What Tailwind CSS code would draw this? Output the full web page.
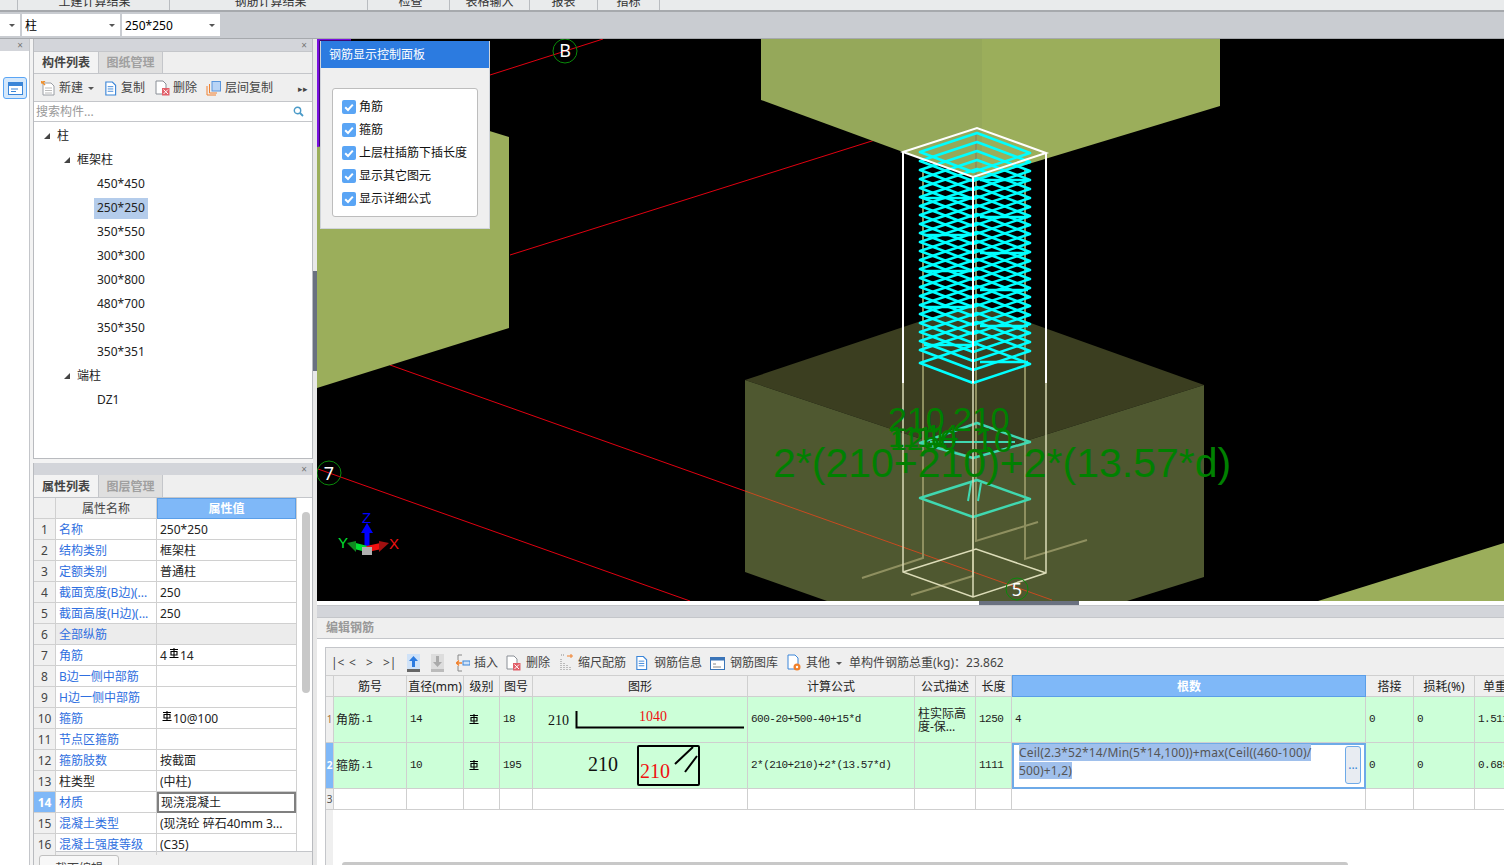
<!DOCTYPE html>
<html lang="zh-CN">
<head>
<meta charset="utf-8">
<title>钢筋</title>
<script src="https://cdn.jsdelivr.net/npm/@tailwindcss/browser@4"></script>
</head>
<body class="m-0 bg-white">
<svg width="0" height="0" class="absolute">
  <defs>
    <symbol id="rb" viewBox="0 0 10 12"><path d="M1 1.5H9M5 0V9M2 3.5H8V7H2ZM0.5 9.5H9.5" fill="none" stroke="currentColor" stroke-width="1.1"/></symbol>
    <symbol id="chk" viewBox="0 0 14 14"><rect width="14" height="14" rx="2" fill="#5aa5f5"/><path d="M3.2 7.2L6 10L10.8 4.6" fill="none" stroke="#fff" stroke-width="2"/></symbol>
    <symbol id="doc" viewBox="0 0 14 16"><path d="M2 1H9L12.5 4.5V15H2Z" fill="#fff" stroke="#3a85d8" stroke-width="1.2"/><path d="M4 6H10M4 8.5H10M4 11H10" stroke="#3a85d8"/></symbol>
    <symbol id="del" viewBox="0 0 15 16"><path d="M1 1H8L11 4V14H1Z" fill="#fff" stroke="#8a8f96"/><rect x="7" y="8" width="7.5" height="7.5" fill="#e2606a"/><path d="M8.5 9.5L13 14M13 9.5L8.5 14" stroke="#fff"/></symbol>
    <g id="hoop"><path d="M920 152L977 133L1030 153L973 172Z" fill="none" stroke="#00ffff" stroke-width="2.6" stroke-linejoin="round"/></g>
  </defs>
</svg>

<div class="w-[1504px] h-[865px] overflow-hidden flex flex-col font-['Noto_Sans','Noto_Sans_CJK_SC',sans-serif] text-[12px] text-black bg-[#f3f3f3]">

  <!-- top tabs, clipped by the window -->
  <div class="h-[12px] shrink-0 flex items-end overflow-hidden bg-[#e9ebec] border-b-2 border-[#a6a9ad] text-[#333]">
    <div class="w-[18px] h-full border-r border-[#b9bcc0]"></div>
    <div class="w-[152px] h-full flex items-end justify-center pl-[2px] border-r border-[#b9bcc0]"><span class="leading-[16px]">土建计算结果</span></div>
    <div class="w-[198px] h-full flex items-end justify-center pl-[4px] border-r border-[#b9bcc0]"><span class="leading-[16px]">钢筋计算结果</span></div>
    <div class="w-[82px] h-full flex items-end justify-center pl-[4px] border-r border-[#b9bcc0]"><span class="leading-[16px]">检查</span></div>
    <div class="w-[80px] h-full flex items-end justify-center border-r border-[#b9bcc0]"><span class="leading-[16px]">表格输入</span></div>
    <div class="w-[68px] h-full flex items-end justify-center border-r border-[#b9bcc0]"><span class="leading-[16px]">报表</span></div>
    <div class="w-[62px] h-full flex items-end justify-center border-r border-[#b9bcc0]"><span class="leading-[16px]">指标</span></div>
  </div>

  <!-- selector bar -->
  <div class="h-[27px] shrink-0 flex items-center bg-[#c9ccd1] border-b border-[#a6a9ad]">
    <div class="w-[20px] h-[22px] bg-white flex items-center justify-end pr-[5px]"><span class="w-0 h-0 border-x-[3px] border-x-transparent border-t-[3px] border-t-[#555]"></span></div>
    <div class="w-[98px] h-[22px] ml-[2px] bg-white flex items-center justify-between pl-[3px] pr-[5px] pt-[1px]"><span>柱</span><span class="w-0 h-0 border-x-[3px] border-x-transparent border-t-[3px] border-t-[#555]"></span></div>
    <div class="w-[98px] h-[22px] ml-[2px] bg-white flex items-center justify-between pl-[3px] pr-[5px] pt-[1px]"><span>250*250</span><span class="w-0 h-0 border-x-[3px] border-x-transparent border-t-[3px] border-t-[#555]"></span></div>
  </div>

  <div class="flex-1 flex min-h-0">
    <!-- rail -->
    <div class="w-[30px] shrink-0 bg-white border-r border-[#c4c6ca] flex flex-col">
      <div class="h-[12px] bg-[#d3d5da] flex items-center justify-end pr-[6px] text-[10px] leading-none text-[#777]">×</div>
      <div class="ml-[3px] mt-[26px] w-[24px] h-[22px] rounded-[3px] border border-[#5aa5f5] bg-[#d5e8fb] flex items-center justify-center">
        <svg width="15" height="13" viewBox="0 0 15 13"><rect x="0.5" y="0.5" width="14" height="12" fill="#fff" stroke="#3a85d8"/><rect x="0.5" y="0.5" width="14" height="3.5" fill="#3a85d8"/><path d="M3 7H10M3 9.5H8" stroke="#3a85d8"/></svg>
      </div>
    </div>

    <!-- left column -->
    <div class="w-[280px] ml-[3px] shrink-0 flex flex-col">
      <!-- component list -->
      <div class="h-[420px] shrink-0 flex flex-col border-x border-b border-[#b9bbbf] bg-white">
        <div class="h-[12px] bg-[#d3d5da] flex items-center justify-end pr-[5px] text-[10px] leading-none text-[#777]">×</div>
        <div class="h-[23px] flex bg-[#efefef] border-y border-[#c4c6ca]">
          <div class="w-[65px] flex items-center justify-center font-bold text-[#444] bg-[#f3f3f3] border-r border-[#c4c6ca]">构件列表</div>
          <div class="w-[64px] flex items-center justify-center font-bold text-[#a0a0a0] bg-[#dfdfdf] border-r border-[#c4c6ca]">图纸管理</div>
        </div>
        <div class="h-[28px] flex items-center bg-[#efefef] border-b border-[#c4c6ca] text-[#444] pt-[1px]">
          <svg class="ml-[7px]" width="15" height="15" viewBox="0 0 15 15"><path d="M2 2H10L13 5V14H2Z" fill="#fff" stroke="#9a9ea4"/><path d="M4 7H11M4 9.500H11M4 12H11" stroke="#bbb"/><path d="M0 2L4 0M0 0L4 4" stroke="#f0902c" stroke-width="1.5"/></svg>
          <span class="ml-[3px]">新建</span>
          <span class="ml-[5px] w-0 h-0 border-x-[3px] border-x-transparent border-t-[3px] border-t-[#555]"></span>
          <svg class="ml-[10px] w-[13px] h-[15px]"><use href="#doc"/></svg>
          <span class="ml-[4px]">复制</span>
          <svg class="ml-[10px] w-[15px] h-[16px]"><use href="#del"/></svg>
          <span class="ml-[3px]">删除</span>
          <svg class="ml-[9px]" width="15" height="15" viewBox="0 0 15 15"><path d="M1 14V5M1 14H10M3.500 12V3M3.500 12H11" fill="none" stroke="#f08030"/><rect x="6" y="0.500" width="8.500" height="9.500" fill="#b8d4f6" stroke="#5a96dc"/></svg>
          <span class="ml-[4px]">层间复制</span>
          <span class="ml-[25px] text-[9px] leading-none">▸▸</span>
        </div>
        <div class="h-[20px] flex items-center justify-between pl-[2px] pr-[8px] text-[#999] border-b border-[#c4c6ca]">
          <span>搜索构件...</span>
          <svg width="11" height="11" viewBox="0 0 11 11"><circle cx="4.500" cy="4.500" r="3.200" fill="none" stroke="#4a9ac8" stroke-width="1.400"/><path d="M7 7L10 10" stroke="#4a9ac8" stroke-width="1.800"/></svg>
        </div>
        <div class="flex-1 pt-[2px] text-[#222]">
          <div class="h-[24px] flex items-center pl-[10px]"><span class="w-0 h-0 border-l-[6px] border-l-transparent border-b-[6px] border-b-[#444]"></span><span class="ml-[7px]">柱</span></div>
          <div class="h-[24px] flex items-center pl-[30px]"><span class="w-0 h-0 border-l-[6px] border-l-transparent border-b-[6px] border-b-[#444]"></span><span class="ml-[7px]">框架柱</span></div>
          <div class="h-[24px] flex items-center pl-[63px]">450*450</div>
          <div class="h-[24px] flex items-center pl-[60px]"><span class="h-[21px] px-[3px] flex items-center bg-[#b4cceb]">250*250</span></div>
          <div class="h-[24px] flex items-center pl-[63px]">350*550</div>
          <div class="h-[24px] flex items-center pl-[63px]">300*300</div>
          <div class="h-[24px] flex items-center pl-[63px]">300*800</div>
          <div class="h-[24px] flex items-center pl-[63px]">480*700</div>
          <div class="h-[24px] flex items-center pl-[63px]">350*350</div>
          <div class="h-[24px] flex items-center pl-[63px]">350*351</div>
          <div class="h-[24px] flex items-center pl-[30px]"><span class="w-0 h-0 border-l-[6px] border-l-transparent border-b-[6px] border-b-[#444]"></span><span class="ml-[7px]">端柱</span></div>
          <div class="h-[24px] flex items-center pl-[63px]">DZ1</div>
        </div>
      </div>

      <!-- property list -->
      <div class="mt-[4px] flex-1 min-h-0 flex flex-col border-x border-[#b9bbbf] bg-[#f0f0f0]">
        <div class="h-[12px] shrink-0 bg-[#d3d5da] flex items-center justify-end pr-[5px] text-[10px] leading-none text-[#777]">×</div>
        <div class="h-[23px] shrink-0 flex bg-[#efefef] border-b border-[#c4c6ca]">
          <div class="w-[65px] pt-[1px] flex items-center justify-center font-bold text-[#444] bg-[#f3f3f3] border-r border-[#c4c6ca]">属性列表</div>
          <div class="w-[64px] pt-[1px] flex items-center justify-center font-bold text-[#a0a0a0] bg-[#dfdfdf] border-r border-[#c4c6ca]">图层管理</div>
        </div>
        <div class="flex h-[354px] shrink-0 bg-white border-b border-[#c4c6ca]">
          <div class="w-[262px] grid grid-cols-[22px_101px_139px] auto-rows-[21px] text-[#222] [&>div]:pt-[1px]">
            <div class="bg-[#f0f0f0] border-r border-b border-[#d0d0d0]"></div><div class="bg-[#f0f0f0] border-r border-b border-[#d0d0d0] flex items-center justify-center text-[#444]">属性名称</div><div class="bg-[#7fb8f8] border border-[#5a9ee8] flex items-center justify-center font-bold text-white">属性值</div>
            <div class="bg-[#f0f0f0] border-r border-b border-[#d0d0d0] flex items-center justify-center text-[#444]">1</div><div class="border-r border-b border-[#d0d0d0] pl-[3px] flex items-center text-[#2f6fe0]">名称</div><div class="border-b border-[#d0d0d0] pl-[3px] flex items-center">250*250</div>
            <div class="bg-[#f0f0f0] border-r border-b border-[#d0d0d0] flex items-center justify-center text-[#444]">2</div><div class="border-r border-b border-[#d0d0d0] pl-[3px] flex items-center text-[#2f6fe0]">结构类别</div><div class="border-b border-[#d0d0d0] pl-[3px] flex items-center">框架柱</div>
            <div class="bg-[#f0f0f0] border-r border-b border-[#d0d0d0] flex items-center justify-center text-[#444]">3</div><div class="border-r border-b border-[#d0d0d0] pl-[3px] flex items-center text-[#2f6fe0]">定额类别</div><div class="border-b border-[#d0d0d0] pl-[3px] flex items-center">普通柱</div>
            <div class="bg-[#f0f0f0] border-r border-b border-[#d0d0d0] flex items-center justify-center text-[#444]">4</div><div class="border-r border-b border-[#d0d0d0] pl-[3px] flex items-center text-[#2f6fe0] whitespace-nowrap">截面宽度(B边)(...</div><div class="border-b border-[#d0d0d0] pl-[3px] flex items-center">250</div>
            <div class="bg-[#f0f0f0] border-r border-b border-[#d0d0d0] flex items-center justify-center text-[#444]">5</div><div class="border-r border-b border-[#d0d0d0] pl-[3px] flex items-center text-[#2f6fe0] whitespace-nowrap">截面高度(H边)(...</div><div class="border-b border-[#d0d0d0] pl-[3px] flex items-center">250</div>
            <div class="bg-[#f0f0f0] border-r border-b border-[#d0d0d0] flex items-center justify-center text-[#444]">6</div><div class="bg-[#ececec] border-r border-b border-[#d0d0d0] pl-[3px] flex items-center text-[#2f6fe0]">全部纵筋</div><div class="bg-[#ececec] border-b border-[#d0d0d0] pl-[3px]"></div>
            <div class="bg-[#f0f0f0] border-r border-b border-[#d0d0d0] flex items-center justify-center text-[#444]">7</div><div class="border-r border-b border-[#d0d0d0] pl-[3px] flex items-center text-[#2f6fe0]">角筋</div><div class="border-b border-[#d0d0d0] pl-[3px] flex items-center">4<svg class="w-[10px] h-[12px] mb-[3px] text-black ml-[2px] mr-[1px]"><use href="#rb"/></svg>14</div>
            <div class="bg-[#f0f0f0] border-r border-b border-[#d0d0d0] flex items-center justify-center text-[#444]">8</div><div class="border-r border-b border-[#d0d0d0] pl-[3px] flex items-center text-[#2f6fe0]">B边一侧中部筋</div><div class="border-b border-[#d0d0d0]"></div>
            <div class="bg-[#f0f0f0] border-r border-b border-[#d0d0d0] flex items-center justify-center text-[#444]">9</div><div class="border-r border-b border-[#d0d0d0] pl-[3px] flex items-center text-[#2f6fe0]">H边一侧中部筋</div><div class="border-b border-[#d0d0d0]"></div>
            <div class="bg-[#f0f0f0] border-r border-b border-[#d0d0d0] flex items-center justify-center text-[#444]">10</div><div class="border-r border-b border-[#d0d0d0] pl-[3px] flex items-center text-[#2f6fe0]">箍筋</div><div class="border-b border-[#d0d0d0] pl-[5px] flex items-center"><svg class="w-[10px] h-[12px] mb-[3px] text-black mr-[1px]"><use href="#rb"/></svg>10@100</div>
            <div class="bg-[#f0f0f0] border-r border-b border-[#d0d0d0] flex items-center justify-center text-[#444]">11</div><div class="border-r border-b border-[#d0d0d0] pl-[3px] flex items-center text-[#2f6fe0]">节点区箍筋</div><div class="border-b border-[#d0d0d0]"></div>
            <div class="bg-[#f0f0f0] border-r border-b border-[#d0d0d0] flex items-center justify-center text-[#444]">12</div><div class="border-r border-b border-[#d0d0d0] pl-[3px] flex items-center text-[#2f6fe0]">箍筋肢数</div><div class="border-b border-[#d0d0d0] pl-[3px] flex items-center">按截面</div>
            <div class="bg-[#f0f0f0] border-r border-b border-[#d0d0d0] flex items-center justify-center text-[#444]">13</div><div class="border-r border-b border-[#d0d0d0] pl-[3px] flex items-center">柱类型</div><div class="border-b border-[#d0d0d0] pl-[3px] flex items-center">(中柱)</div>
            <div class="bg-[#7fb8f8] border-r border-b border-[#d0d0d0] flex items-center justify-center font-bold text-white">14</div><div class="border-r border-b border-[#d0d0d0] pl-[3px] flex items-center text-[#2f6fe0]">材质</div><div class="border-2 border-[#808080] pl-[2px] flex items-center">现浇混凝土</div>
            <div class="bg-[#f0f0f0] border-r border-b border-[#d0d0d0] flex items-center justify-center text-[#444]">15</div><div class="border-r border-b border-[#d0d0d0] pl-[3px] flex items-center text-[#2f6fe0]">混凝土类型</div><div class="border-b border-[#d0d0d0] pl-[3px] flex items-center whitespace-nowrap">(现浇砼 碎石40mm 3...</div>
            <div class="bg-[#f0f0f0] border-r border-[#d0d0d0] flex items-center justify-center text-[#444]">16</div><div class="border-r border-[#d0d0d0] pl-[3px] flex items-center text-[#2f6fe0]">混凝土强度等级</div><div class="pl-[3px] flex items-center">(C35)</div>
          </div>
          <div class="flex-1 border-l border-[#d0d0d0] pt-[14px] pl-[5px]"><div class="w-[8px] h-[181px] rounded-[4px] bg-[#c8c8c8]"></div></div>
        </div>
        <div class="ml-[5px] mt-[3px] w-[80px] h-[20px] pt-[4px] rounded-t-[3px] bg-[#f8f8f8] border border-[#c0c0c0] text-center text-[#444]">截面编辑</div>
      </div>
    </div>

    <!-- splitter -->
    <div class="w-[4px] shrink-0 bg-[#e8e8e8] pt-[232px]"><div class="w-[4px] h-[100px] bg-[#6a7180]"></div></div>

    <!-- right column -->
    <div class="flex-1 min-w-0 flex flex-col">
      <!-- 3D canvas -->
      <div class="relative h-[562px] shrink-0 bg-black overflow-hidden">
        <svg class="absolute left-0 top-0" width="1187" height="562" viewBox="317 39 1187 562">
          <path d="M317 39H351M318 39V147" fill="none" stroke="#7a10e0" stroke-width="3"/>
          <!-- red axes behind blocks -->
          <path d="M490 75L603 39M510 255L875 140M318 469L690 601M390 365L745 491" stroke="#e00010" stroke-width="1"/>
          <!-- left block -->
          <polygon points="317,147 470,125 509,137 509,328 317,388" fill="#9bae5b"/>
          <!-- upper slab -->
          <polygon points="761,39 982,39 982,180 903,152 761,100" fill="#95a85a"/>
          <polygon points="982,39 1220,39 1220,106 982,178" fill="#9bae5b"/>
          <!-- lower right block -->
          <polygon points="1504,543 1504,601 1318,601" fill="#9bae5b"/>
          <!-- pedestal -->
          <polygon points="745,380 975,303 1204,385 975,457" fill="#3b3e20"/>
          <polygon points="745,380 975,457 975,601 827,601 745,572" fill="#4f5830"/>
          <polygon points="975,457 1204,385 1204,577 1127,601 975,601" fill="#4f5830"/>
          <path d="M745 491L1052 600" stroke="#c84a20" stroke-width="1"/>
          <!-- rebar verticals and feet -->
          <path d="M923 170V558L862 578M1025 170V559L1087 540M976 135V541L1038 522M973 520V576L911 595" fill="none" stroke="#8f9060" stroke-width="2"/>
          <!-- hoops -->
          <g>
            <use href="#hoop"/><use href="#hoop" y="9"/><use href="#hoop" y="18"/><use href="#hoop" y="27"/><use href="#hoop" y="36"/><use href="#hoop" y="45"/><use href="#hoop" y="54"/><use href="#hoop" y="63"/>
            <use href="#hoop" y="72"/><use href="#hoop" y="81"/><use href="#hoop" y="90"/><use href="#hoop" y="99"/><use href="#hoop" y="108"/><use href="#hoop" y="117"/><use href="#hoop" y="126"/><use href="#hoop" y="135"/>
            <use href="#hoop" y="144"/><use href="#hoop" y="153"/><use href="#hoop" y="162"/><use href="#hoop" y="171"/><use href="#hoop" y="180"/><use href="#hoop" y="189"/><use href="#hoop" y="198"/><use href="#hoop" y="211"/>
            <path d="M924 198H972M924 235H972M924 271H972M924 307H972M924 345H972M980 180H1028M980 217H1028M980 253H1028M980 290H1028M980 326H1028M980 362H1028" stroke="#00ffff" stroke-width="2.5"/>
          </g>
          <!-- lower hoops seen through the block -->
          <path d="M920 443L977 423L1030 442L973 458Z M920 498L977 480L1030 499L973 517Z" fill="none" stroke="#40d8b0" stroke-width="2.4" stroke-linejoin="round"/>
          <path d="M968 501L971 483M978 501L981 483M930 442H1015" stroke="#40d8b0" stroke-width="2"/>
          <!-- column wireframe -->
          <path d="M903 152L977 128L1046 153L973 177ZM903 152V383M973 177V383M1046 153V383" fill="none" stroke="#ffffff" stroke-width="2"/>
          <path d="M903 383V572L973 597L1046 573V383M973 383V597M903 572L976 549L1046 573" fill="none" stroke="#dcdcb8" stroke-width="1.500"/>
          <!-- green annotation text -->
          <g fill="#008000" font-family="Liberation Sans, sans-serif">
            <text x="773" y="477" font-size="41">2*(210+210)+2*(13.57*d)</text>
            <text x="888" y="431" font-size="34">210</text>
            <text x="953" y="431" font-size="34">210</text>
            <text x="888" y="447" font-size="30">1111</text>
            <text x="890" y="450" font-size="30">1250</text>
            <text x="975" y="452" font-size="34">10</text>
            <text x="925" y="445" font-size="30">14</text>
          </g>
          <!-- grid bubbles -->
          <circle cx="565" cy="51" r="12" fill="none" stroke="#0a8a0a"/>
          <circle cx="329" cy="473" r="12" fill="none" stroke="#0a8a0a"/>
          <circle cx="1017" cy="589" r="11" fill="none" stroke="#0a8a0a"/>
          <g fill="#fff" font-family="Noto Sans, sans-serif" font-size="18" text-anchor="middle">
            <text x="565" y="57">B</text><text x="329" y="480">7</text><text x="1017" y="596">5</text>
          </g>
          <!-- axis triad -->
          <path d="M367 548V530" stroke="#0000ff" stroke-width="5"/><polygon points="361,533 373,533 367,523" fill="#0000ff"/>
          <path d="M367 549L355 546" stroke="#00e030" stroke-width="6"/><polygon points="356,541 356,552 347,543" fill="#108a20"/>
          <path d="M367 549L381 546" stroke="#f01010" stroke-width="6"/><polygon points="379,541 379,552 389,543" fill="#a01010"/>
          <rect x="362" y="547" width="10" height="8" fill="#b0b0b0"/>
          <g font-family="Liberation Sans, sans-serif" font-size="15">
            <text x="362" y="523" fill="#0000ff">Z</text><text x="338" y="548" fill="#00e030">Y</text><text x="389" y="549" fill="#f01010">X</text>
          </g>
        </svg>

        <!-- control panel overlay -->
        <div class="absolute left-[3px] top-[2px] w-[170px] h-[188px] bg-[#efefef] border-b border-r border-l border-[#d0d4da]">
          <div class="h-[27px] bg-[#2c7be0] text-white flex items-center pl-[8px]">钢筋显示控制面板</div>
          <div class="ml-[11px] mt-[20px] w-[146px] h-[129px] bg-white border border-[#bdbdbd] rounded-[3px] pt-[6px] pl-[9px] text-[#111]">
            <div class="h-[23px] flex items-center"><svg class="w-[14px] h-[14px]"><use href="#chk"/></svg><span class="ml-[3px]">角筋</span></div>
            <div class="h-[23px] flex items-center"><svg class="w-[14px] h-[14px]"><use href="#chk"/></svg><span class="ml-[3px]">箍筋</span></div>
            <div class="h-[23px] flex items-center"><svg class="w-[14px] h-[14px]"><use href="#chk"/></svg><span class="ml-[3px]">上层柱插筋下插长度</span></div>
            <div class="h-[23px] flex items-center"><svg class="w-[14px] h-[14px]"><use href="#chk"/></svg><span class="ml-[3px]">显示其它图元</span></div>
            <div class="h-[23px] flex items-center"><svg class="w-[14px] h-[14px]"><use href="#chk"/></svg><span class="ml-[3px]">显示详细公式</span></div>
          </div>
        </div>
      </div>

      <!-- splitter under canvas -->
      <div class="h-[4px] shrink-0 bg-white"><div class="ml-[662px] w-[100px] h-[4px] bg-[#6a7180]"></div></div>

      <!-- edit rebar panel -->
      <div class="flex-1 min-h-0 flex flex-col bg-white">
        <div class="h-[12px] shrink-0 bg-[#d3d5da] border-t border-[#c4c6ca]"></div>
        <div class="h-[22px] shrink-0 bg-[#efefef] border-y border-[#c4c6ca] flex items-center pl-[9px] font-bold text-[#999]">编辑钢筋</div>
        <div class="relative flex-1 min-h-0 mt-[8px] ml-[8px] border-l border-t border-[#c4c6ca] flex flex-col">
          <!-- toolbar -->
          <div class="h-[27px] shrink-0 bg-[#efefef] flex items-center text-[#444] whitespace-nowrap pl-[5px] pt-[3px]">
            <span class="w-[18px]">|&lt;</span><span class="w-[17px]">&lt;</span><span class="w-[17px]">&gt;</span><span class="w-[13px]">&gt;|</span>
            <svg class="ml-[11px]" width="13" height="18" viewBox="0 0 13 18"><rect width="13" height="15" fill="#cfe2f8"/><path d="M6.500 2L11 7H8V13H5V7H2Z" fill="#2c7be0"/><rect y="15" width="13" height="3" fill="#666"/></svg>
            <svg class="ml-[11px]" width="13" height="18" viewBox="0 0 13 18"><rect width="13" height="15" fill="#ddd"/><path d="M6.500 13L11 8H8V2H5V8H2Z" fill="#aaa"/><rect y="15" width="13" height="3" fill="#bbb"/></svg>
            <svg class="ml-[12px]" width="14" height="18" viewBox="0 0 14 18"><path d="M2 1H6M2 1V6M2 12V17H6M2 17" fill="none" stroke="#888"/><path d="M0 9H6M3 6.500L0.500 9L3 11.500" fill="none" stroke="#f0802c" stroke-width="1.500"/><rect x="7" y="7" width="7" height="4" fill="#cfe2f8" stroke="#3a85d8"/></svg>
            <span class="ml-[4px]">插入</span>
            <svg class="ml-[8px] w-[15px] h-[16px]"><use href="#del"/></svg>
            <span class="ml-[5px]">删除</span>
            <svg class="ml-[10px]" width="13" height="18" viewBox="0 0 13 18"><path d="M1 1H5M1 5V17M4 9V17M7 11V17M10 13V17" stroke="#888" stroke-dasharray="1 1" fill="none"/><path d="M7 2H13M11 0V4" stroke="#f0802c"/></svg>
            <span class="ml-[5px]">缩尺配筋</span>
            <svg class="ml-[9px] w-[13px] h-[16px]"><use href="#doc"/></svg>
            <span class="ml-[6px]">钢筋信息</span>
            <svg class="ml-[8px]" width="15" height="13" viewBox="0 0 15 13"><rect x="0.500" y="0.500" width="14" height="12" fill="#fff" stroke="#3a75b8"/><rect x="0.500" y="0.500" width="14" height="3" fill="#3a75b8"/><path d="M3 7H6M3 10H11" stroke="#888"/></svg>
            <span class="ml-[5px]">钢筋图库</span>
            <svg class="ml-[9px]" width="15" height="18" viewBox="0 0 15 18"><path d="M1 1H8L11 4V15H1Z" fill="#fff" stroke="#3a85d8"/><circle cx="10" cy="13" r="3.500" fill="#f0802c"/><circle cx="10" cy="13" r="1.200" fill="#fff"/></svg>
            <span class="ml-[4px]">其他</span>
            <span class="ml-[6px] w-0 h-0 border-x-[3px] border-x-transparent border-t-[3px] border-t-[#555]"></span>
            <span class="ml-[7px]">单构件钢筋总重(kg)：23.862</span>
          </div>
          <!-- grid -->
          <div class="grid grid-cols-[8px_73px_57px_36px_33px_215px_167px_61px_36px_354px_48px_61px_40px] grid-rows-[22px_46px_46px_21px] w-[1189px] text-[#222]">
            <div class="bg-[#efefef] border-y border-r border-[#cfcfcf]"></div>
            <div class="bg-[#efefef] border-y border-r border-[#cfcfcf] pt-[1px] flex items-center justify-center">筋号</div>
            <div class="bg-[#efefef] border-y border-r border-[#cfcfcf] pt-[1px] flex items-center justify-center">直径(mm)</div>
            <div class="bg-[#efefef] border-y border-r border-[#cfcfcf] pt-[1px] flex items-center justify-center">级别</div>
            <div class="bg-[#efefef] border-y border-r border-[#cfcfcf] pt-[1px] flex items-center justify-center">图号</div>
            <div class="bg-[#efefef] border-y border-r border-[#cfcfcf] pt-[1px] flex items-center justify-center">图形</div>
            <div class="bg-[#efefef] border-y border-r border-[#cfcfcf] pt-[1px] flex items-center justify-center">计算公式</div>
            <div class="bg-[#efefef] border-y border-r border-[#cfcfcf] pt-[1px] flex items-center justify-center">公式描述</div>
            <div class="bg-[#efefef] border-y border-r border-[#cfcfcf] pt-[1px] flex items-center justify-center">长度</div>
            <div class="bg-[#7fb8f8] border border-[#5a9ee8] pt-[1px] flex items-center justify-center font-bold text-white">根数</div>
            <div class="bg-[#efefef] border-y border-r border-[#cfcfcf] pt-[1px] flex items-center justify-center">搭接</div>
            <div class="bg-[#efefef] border-y border-r border-[#cfcfcf] pt-[1px] flex items-center justify-center">损耗(%)</div>
            <div class="bg-[#efefef] border-y border-[#cfcfcf] pt-[1px] pl-[8px] flex items-center whitespace-nowrap overflow-hidden">单重(kg)</div>

            <div class="bg-[#efefef] border-b border-r border-[#cfcfcf] flex items-center justify-center text-[10px] text-[#a5743a]">1</div>
            <div class="bg-[#ccffd8] border-b border-r border-[#cfcfcf] pl-[2px] flex items-center whitespace-nowrap">角筋<span class="font-['Liberation_Mono'] text-[11px] tracking-[-0.5px]">.1</span></div>
            <div class="bg-[#ccffd8] border-b border-r border-[#cfcfcf] pl-[3px] flex items-center font-['Liberation_Mono'] text-[11px] tracking-[-0.5px]">14</div>
            <div class="bg-[#ccffd8] border-b border-r border-[#cfcfcf] pl-[5px] flex items-center"><svg class="w-[10px] h-[12px] text-black"><use href="#rb"/></svg></div>
            <div class="bg-[#ccffd8] border-b border-r border-[#cfcfcf] pl-[3px] flex items-center font-['Liberation_Mono'] text-[11px] tracking-[-0.5px]">18</div>
            <div class="bg-[#ccffd8] border-b border-r border-[#cfcfcf]">
              <svg width="214" height="45" viewBox="0 0 214 45"><text x="15" y="28" font-family="Liberation Serif, serif" font-size="14" fill="#111">210</text><path d="M43.500 14V30.500H211" fill="none" stroke="#000" stroke-width="2"/><text x="106" y="24" font-family="Liberation Serif, serif" font-size="14" fill="#f01010">1040</text></svg>
            </div>
            <div class="bg-[#ccffd8] border-b border-r border-[#cfcfcf] pl-[3px] flex items-center font-['Liberation_Mono'] text-[11px] tracking-[-0.5px] whitespace-nowrap">600-20+500-40+15*d</div>
            <div class="bg-[#ccffd8] border-b border-r border-[#cfcfcf] pl-[3px] flex items-center leading-[13px]">柱实际高<br>度-保…</div>
            <div class="bg-[#ccffd8] border-b border-r border-[#cfcfcf] pl-[3px] flex items-center font-['Liberation_Mono'] text-[11px] tracking-[-0.5px]">1250</div>
            <div class="bg-[#ccffd8] border-b border-r border-[#cfcfcf] pl-[3px] flex items-center font-['Liberation_Mono'] text-[11px] tracking-[-0.5px]">4</div>
            <div class="bg-[#ccffd8] border-b border-r border-[#cfcfcf] pl-[3px] flex items-center font-['Liberation_Mono'] text-[11px] tracking-[-0.5px]">0</div>
            <div class="bg-[#ccffd8] border-b border-r border-[#cfcfcf] pl-[3px] flex items-center font-['Liberation_Mono'] text-[11px] tracking-[-0.5px]">0</div>
            <div class="bg-[#ccffd8] border-b border-[#cfcfcf] pl-[3px] flex items-center font-['Liberation_Mono'] text-[11px] tracking-[-0.5px] whitespace-nowrap overflow-hidden">1.511</div>

            <div class="bg-[#7fb8f8] border-b border-r border-[#cfcfcf] flex items-center justify-center text-[10px] font-bold text-white">2</div>
            <div class="bg-[#ccffd8] border-b border-r border-[#cfcfcf] pl-[2px] flex items-center whitespace-nowrap">箍筋<span class="font-['Liberation_Mono'] text-[11px] tracking-[-0.5px]">.1</span></div>
            <div class="bg-[#ccffd8] border-b border-r border-[#cfcfcf] pl-[3px] flex items-center font-['Liberation_Mono'] text-[11px] tracking-[-0.5px]">10</div>
            <div class="bg-[#ccffd8] border-b border-r border-[#cfcfcf] pl-[5px] flex items-center"><svg class="w-[10px] h-[12px] text-black"><use href="#rb"/></svg></div>
            <div class="bg-[#ccffd8] border-b border-r border-[#cfcfcf] pl-[3px] flex items-center font-['Liberation_Mono'] text-[11px] tracking-[-0.5px]">195</div>
            <div class="bg-[#ccffd8] border-b border-r border-[#cfcfcf]">
              <svg width="214" height="45" viewBox="0 0 214 45"><text x="55" y="28" font-family="Liberation Serif, serif" font-size="20" fill="#111">210</text><rect x="105" y="3" width="61" height="39" rx="1" fill="none" stroke="#000" stroke-width="2"/><path d="M142 21L160 4M152 29L164 13" stroke="#000" stroke-width="2"/><text x="107" y="35" font-family="Liberation Serif, serif" font-size="20" fill="#f01010">210</text></svg>
            </div>
            <div class="bg-[#ccffd8] border-b border-r border-[#cfcfcf] pl-[3px] flex items-center font-['Liberation_Mono'] text-[11px] tracking-[-0.5px] whitespace-nowrap">2*(210+210)+2*(13.57*d)</div>
            <div class="bg-[#ccffd8] border-b border-r border-[#cfcfcf]"></div>
            <div class="bg-[#ccffd8] border-b border-r border-[#cfcfcf] pl-[3px] flex items-center font-['Liberation_Mono'] text-[11px] tracking-[-0.5px]">1111</div>
            <div class="border-2 border-[#6eaae8] bg-white flex justify-between pl-[5px] pr-[3px] text-[#555] whitespace-nowrap">
              <div class="leading-[18px] mt-[-1px] tracking-[0.15px]"><span class="bg-[#a0c0ec]">Ceil(2.3*52*14/Min(5*14,100))+max(Ceil((460-100)/</span><br><span class="bg-[#a0c0ec]">500)+1,2)</span></div>
              <div class="mt-[1px] w-[16px] h-[38px] rounded-[3px] border border-[#6eaae8] bg-[#e8ecf2] flex items-center justify-center text-[#3a85d8] leading-none">...</div>
            </div>
            <div class="bg-[#ccffd8] border-b border-r border-[#cfcfcf] pl-[3px] flex items-center font-['Liberation_Mono'] text-[11px] tracking-[-0.5px]">0</div>
            <div class="bg-[#ccffd8] border-b border-r border-[#cfcfcf] pl-[3px] flex items-center font-['Liberation_Mono'] text-[11px] tracking-[-0.5px]">0</div>
            <div class="bg-[#ccffd8] border-b border-[#cfcfcf] pl-[3px] flex items-center font-['Liberation_Mono'] text-[11px] tracking-[-0.5px] whitespace-nowrap overflow-hidden">0.685</div>

            <div class="bg-[#efefef] border-b border-r border-[#cfcfcf] flex items-center justify-center text-[10px] text-[#555]">3</div>
            <div class="border-b border-r border-[#cfcfcf]"></div><div class="border-b border-r border-[#cfcfcf]"></div><div class="border-b border-r border-[#cfcfcf]"></div><div class="border-b border-r border-[#cfcfcf]"></div><div class="border-b border-r border-[#cfcfcf]"></div><div class="border-b border-r border-[#cfcfcf]"></div><div class="border-b border-r border-[#cfcfcf]"></div><div class="border-b border-r border-[#cfcfcf]"></div><div class="border-b border-r border-[#cfcfcf]"></div><div class="border-b border-r border-[#cfcfcf]"></div><div class="border-b border-r border-[#cfcfcf]"></div><div class="border-b border-[#cfcfcf]"></div>
          </div>
          <div class="flex-1 min-h-0 flex">
            <div class="w-[7px] bg-[#efefef]"></div>
            <div class="flex-1 flex flex-col justify-end"><div class="ml-[9px] w-[1006px] h-[3px] rounded-t-[3px] bg-[#c8c8c8]"></div></div>
          </div>
        </div>
      </div>
    </div>
  </div>
</div>
</body>
</html>
